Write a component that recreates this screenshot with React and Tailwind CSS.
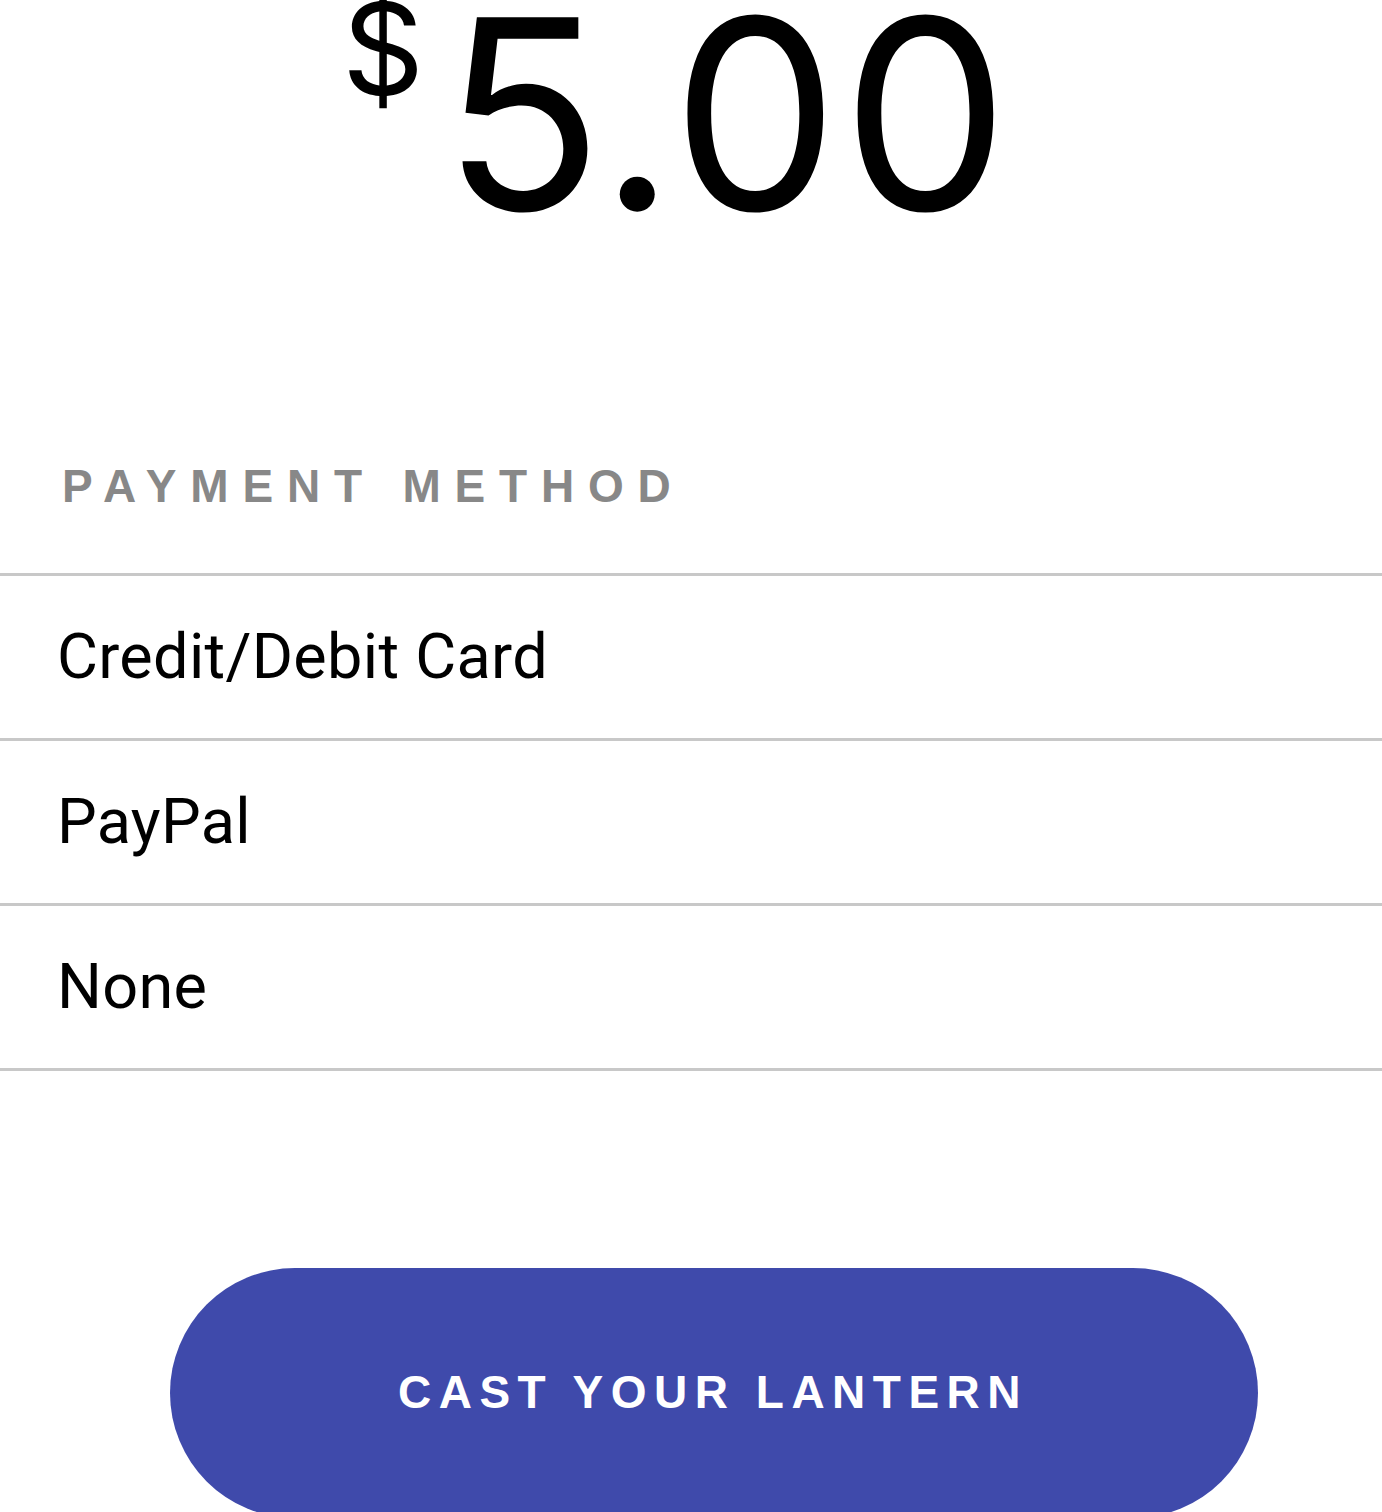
import React from 'react';

const methods = ['Credit/Debit Card', 'PayPal', 'None'];

export default function App() {
  return (
    <div className="w-[1382px] h-[1512px] overflow-hidden bg-white">
      {/* amount */}
      <div className="flex items-start justify-center pr-[28px] h-[260px]">
        <span
          className="text-[128px] leading-none text-black -mt-[15px] mr-[18px]"
          style={{ fontFamily: 'Inter, "Noto Sans", sans-serif' }}
        >
          $
        </span>
        <span
          className="text-[265px] leading-none text-black -mt-[19px] tracking-[3px]"
          style={{ fontFamily: 'Inter, "Noto Sans", sans-serif' }}
        >
          5.00
        </span>
      </div>

      {/* payment method */}
      <div className="pt-[203px] pl-[62px] pb-[64px]">
        <div className="font-['Liberation_Sans',Arial,sans-serif] font-bold text-[46px] leading-none tracking-[0.3em] text-[#888888] uppercase">
          Payment Method
        </div>
      </div>

      <div className="border-t-[3px] border-[#c8c8c8]">
        {methods.map((m) => (
          <div
            key={m}
            className="h-[165px] flex items-center pl-[57px] border-b-[3px] border-[#c8c8c8] font-['Roboto',sans-serif] text-[63px] tracking-[0.3px] text-black"
          >
            {m}
          </div>
        ))}
      </div>

      {/* cta */}
      <div className="pt-[197px]">
        <button className="ml-[170px] w-[1088px] h-[250px] rounded-full bg-[#3f4aab] text-white font-['Liberation_Sans',Arial,sans-serif] font-bold text-[46px] tracking-[7.5px] uppercase flex items-center justify-center pr-[2px] pb-[2px]">
          Cast your lantern
        </button>
      </div>
    </div>
  );
}
